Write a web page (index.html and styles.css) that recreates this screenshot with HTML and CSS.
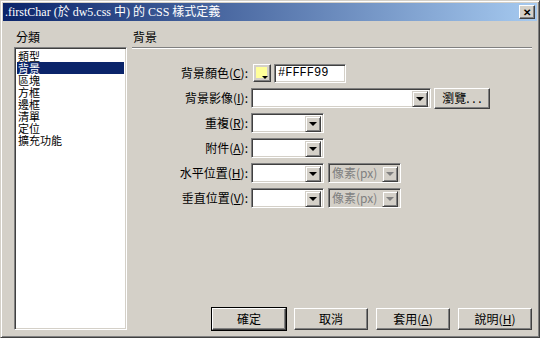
FILE: index.html
```html
<!DOCTYPE html>
<html lang="zh-Hant">
<head>
  <meta charset="UTF-8" />
  <title>.firstChar CSS 樣式定義</title>
  <link rel="stylesheet" href="styles.css">
</head>
<body>
  <div class="window">
    <div class="titlebar">
      <span class="title">.firstChar (於 dw5.css 中) 的 CSS 樣式定義</span>
      <span class="close">&#x2715;</span>
    </div>
    <div class="main">
      <div class="side">
        <div class="caption">分類</div>
        <ul class="list">
          <li>類型</li>
          <li class="sel">背景</li>
          <li>區塊</li>
          <li>方框</li>
          <li>邊框</li>
          <li>清單</li>
          <li>定位</li>
          <li>擴充功能</li>
        </ul>
      </div>
      <div class="panel">
        <div class="caption head">背景</div>
        <div class="form">
          <div class="row">
            <label class="lbl">背景顏色(<u>C</u>):</label>
            <span class="swatch"><span class="chip"></span><span class="tri"></span></span>
            <span class="field hex">#FFFF99</span>
          </div>
          <div class="row">
            <label class="lbl">背景影像(<u>I</u>):</label>
            <span class="field combo wide"><span class="arrow"></span></span>
            <button class="btn browse">瀏覽. . .</button>
          </div>
          <div class="row">
            <label class="lbl">重複(<u>R</u>):</label>
            <span class="field combo"><span class="arrow"></span></span>
          </div>
          <div class="row">
            <label class="lbl">附件(<u>A</u>):</label>
            <span class="field combo"><span class="arrow"></span></span>
          </div>
          <div class="row">
            <label class="lbl">水平位置(<u>H</u>):</label>
            <span class="field combo"><span class="arrow"></span></span>
            <span class="field combo off unit">像素(px)<span class="arrow"></span></span>
          </div>
          <div class="row">
            <label class="lbl">垂直位置(<u>V</u>):</label>
            <span class="field combo"><span class="arrow"></span></span>
            <span class="field combo off unit">像素(px)<span class="arrow"></span></span>
          </div>
        </div>
        <div class="actions">
          <button class="btn default">確定</button>
          <button class="btn">取消</button>
          <button class="btn">套用(<u>A</u>)</button>
          <button class="btn">說明(<u>H</u>)</button>
        </div>
      </div>
    </div>
  </div>
</body>
</html>
```

FILE: styles.css
```css
* { box-sizing: border-box; }
body { margin: 0; background: #d4d0c8; font-family: "Noto Sans CJK TC", sans-serif; font-size: 12px; line-height: 14px; color: #000; }
u { text-decoration: underline; }

.window { width: 540px; height: 338px; background: #d4d0c8; border: 1px solid; border-color: #d4d0c8 #404040 #404040 #d4d0c8; box-shadow: inset 1px 1px #fff, inset -1px -1px #808080; padding: 2px; display: flex; flex-direction: column; }

.titlebar { height: 18px; display: flex; align-items: center; justify-content: space-between; padding: 0 2px 0 2px; background: linear-gradient(to right, #0a246a, #a6caf0); color: #fff; }
.title { font-family: "Liberation Serif", "Noto Sans CJK TC", serif; font-size: 12px; line-height: 18px; white-space: nowrap; }
.close { width: 16px; height: 14px; background: #d4d0c8; color: #000; font-size: 10px; line-height: 12px; font-weight: bold; text-align: center; border: 1px solid; border-color: #fff #404040 #404040 #fff; box-shadow: inset -1px -1px #808080; }

.main { flex: 1; display: flex; padding: 9px 0 5px 11px; }
.side { width: 113px; display: flex; flex-direction: column; }
.caption { padding-left: 2px; height: 14px; }
.list { flex: 1; margin: 3px 0 0; padding: 2px 0 0 2px; list-style: none; background: #fff; border: 1px solid; border-color: #808080 #fff #fff #808080; box-shadow: inset 1px 1px #404040, inset -1px -1px #d4d0c8; }
.list li { height: 12px; line-height: 12px; font-size: 11px; padding-left: 1px; margin-right: 2px; }
.list li.sel { background: #0a246a; color: #fff; }

.panel { flex: 1; margin-left: 5px; margin-right: 5px; display: flex; flex-direction: column; }
.head { height: 18px; border-bottom: 1px solid #808080; box-shadow: 0 1px #fff; padding-left: 1px; }

.form { margin-top: 15px; display: flex; flex-direction: column; gap: 5px; }
.row { display: flex; align-items: center; height: 20px; }
.lbl { width: 116px; text-align: right; margin-right: 4px; white-space: nowrap; }

.field { display: inline-flex; align-items: center; height: 20px; background: #fff; border: 1px solid; border-color: #808080 #fff #fff #808080; box-shadow: inset 1px 1px #404040, inset -1px -1px #d4d0c8; padding: 0 3px; position: relative; }
.hex { width: 72px; height: 19px; margin-left: 3px; font-family: "Liberation Mono", monospace; font-size: 12px; }
.swatch { width: 18px; height: 18px; margin-left: 1px; position: relative; background: #d4d0c8; border: 1px solid; border-color: #fff #404040 #404040 #fff; box-shadow: inset -1px -1px #808080; padding: 2px; }
.chip { display: block; width: 11px; height: 11px; background: #ffff99; }
.tri { position: absolute; right: 2px; bottom: 2px; width: 0; height: 0; border-left: 3px solid transparent; border-right: 3px solid transparent; border-top: 3px solid #000; }

.combo { width: 73px; margin-left: -1px; }
.combo.wide { width: 180px; }
.unit { margin-left: 4px; }
.arrow { position: absolute; right: 2px; top: 2px; width: 16px; height: 16px; background: #d4d0c8; border: 1px solid; border-color: #d4d0c8 #404040 #404040 #d4d0c8; box-shadow: inset 1px 1px #fff, inset -1px -1px #808080; }
.arrow::after { content: ""; position: absolute; left: 3px; top: 5px; border-left: 4px solid transparent; border-right: 4px solid transparent; border-top: 4px solid #000; }
.off { background: #d4d0c8; color: #808080; }
.off .arrow::after { border-top-color: #808080; }

.btn { font: inherit; color: #000; background: #d4d0c8; border: 1px solid; border-color: #fff #404040 #404040 #fff; box-shadow: inset -1px -1px #808080, inset 1px 1px #d4d0c8; padding: 0; height: 22px; width: 74px; }
.browse { width: 56px; height: 21px; margin-left: 3px; }
.btn.default { outline: 1px solid #000; outline-offset: 0; border-color: #fff #404040 #404040 #fff; }

.actions { margin-top: auto; display: flex; justify-content: flex-end; gap: 8px; margin-right: 0; }
```
